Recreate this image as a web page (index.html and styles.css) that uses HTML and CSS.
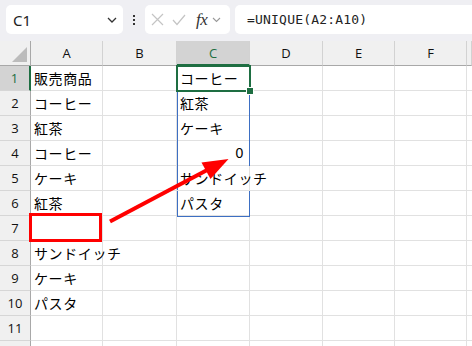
FILE: index.html
```html
<!DOCTYPE html>
<html lang="ja">
<head>
<meta charset="utf-8">
<link rel="stylesheet" href="styles.css">
</head>
<body>
<div class="toolbar">
  <div class="namebox">
    <span class="ref">C1</span>
    <svg class="chev" width="10" height="6" viewBox="0 0 10 6"><path d="M1 1 L5 5 L9 1" fill="none" stroke="#333" stroke-width="1.3"/></svg>
  </div>
  <div class="dots"><i></i><i></i><i></i></div>
  <div class="fxbox">
    <svg class="ic" width="13" height="13" viewBox="0 0 13 13"><path d="M1 1 L12 12 M12 1 L1 12" stroke="#c4c4c4" stroke-width="1.2" fill="none"/></svg>
    <svg class="ic" width="14" height="12" viewBox="0 0 14 12"><path d="M1 6 L5 10.5 L13 1" stroke="#c4c4c4" stroke-width="1.2" fill="none"/></svg>
    <span class="fx">fx</span>
    <svg class="chev2" width="9" height="6" viewBox="0 0 9 6"><path d="M1 1 L4.5 4.5 L8 1" fill="none" stroke="#999" stroke-width="1.1"/></svg>
  </div>
  <div class="formula">=UNIQUE(A2:A10)</div>
</div>
<div class="sheet">
  <div class="grid">
    <div class="corner"><span class="tri"></span></div>
    <div class="ch">A</div><div class="ch">B</div><div class="ch sel">C</div><div class="ch">D</div><div class="ch">E</div><div class="ch">F</div><div class="ch last"></div>

    <div class="rh sel">1</div><div class="c">販売商品</div><div class="c"></div><div class="c">コーヒー</div><div class="c"></div><div class="c"></div><div class="c"></div><div class="c last"></div>
    <div class="rh">2</div><div class="c">コーヒー</div><div class="c"></div><div class="c">紅茶</div><div class="c"></div><div class="c"></div><div class="c"></div><div class="c last"></div>
    <div class="rh">3</div><div class="c">紅茶</div><div class="c"></div><div class="c">ケーキ</div><div class="c"></div><div class="c"></div><div class="c"></div><div class="c last"></div>
    <div class="rh">4</div><div class="c">コーヒー</div><div class="c"></div><div class="c num">0</div><div class="c"></div><div class="c"></div><div class="c"></div><div class="c last"></div>
    <div class="rh">5</div><div class="c">ケーキ</div><div class="c"></div><div class="c ov">サンドイッチ</div><div class="c"></div><div class="c"></div><div class="c"></div><div class="c last"></div>
    <div class="rh">6</div><div class="c">紅茶</div><div class="c"></div><div class="c">パスタ</div><div class="c"></div><div class="c"></div><div class="c"></div><div class="c last"></div>
    <div class="rh">7</div><div class="c"></div><div class="c"></div><div class="c"></div><div class="c"></div><div class="c"></div><div class="c"></div><div class="c last"></div>
    <div class="rh">8</div><div class="c ov">サンドイッチ</div><div class="c"></div><div class="c"></div><div class="c"></div><div class="c"></div><div class="c"></div><div class="c last"></div>
    <div class="rh">9</div><div class="c">ケーキ</div><div class="c"></div><div class="c"></div><div class="c"></div><div class="c"></div><div class="c"></div><div class="c last"></div>
    <div class="rh">10</div><div class="c">パスタ</div><div class="c"></div><div class="c"></div><div class="c"></div><div class="c"></div><div class="c"></div><div class="c last"></div>
    <div class="rh">11</div><div class="c"></div><div class="c"></div><div class="c"></div><div class="c"></div><div class="c"></div><div class="c"></div><div class="c last"></div>
    <div class="rh"></div><div class="c"></div><div class="c"></div><div class="c"></div><div class="c"></div><div class="c"></div><div class="c"></div><div class="c last"></div>
  </div>
  <div class="spill"></div>
  <div class="active"><span class="handle"></span></div>
  <svg class="annot" width="472" height="305" viewBox="0 41 472 305">
    <rect x="30.5" y="214.5" width="70" height="26" fill="none" stroke="#ff0000" stroke-width="3"/>
    <line x1="110" y1="221.5" x2="210" y2="168.5" stroke="#ff0000" stroke-width="4"/>
    <polygon points="228.5,159 210.5,179 201.5,162.5" fill="#ff0000"/>
  </svg>
</div>
</body>
</html>
```
FILE: styles.css
```css
* { box-sizing: border-box; }
html, body { margin: 0; padding: 0; }
body {
  width: 472px;
  height: 346px;
  overflow: hidden;
  background: #ffffff;
  font-family: "Noto Sans", "Noto Sans CJK JP", sans-serif;
}
.toolbar {
  height: 41px;
  background: #efeff3;
  display: flex;
  align-items: flex-start;
  padding: 5px 0 0 6px;
  overflow: hidden;
}
.namebox {
  width: 117px;
  height: 29px;
  background: #fff;
  border-radius: 5px;
  display: flex;
  align-items: center;
  justify-content: space-between;
  padding: 0 6px 0 7px;
  flex: none;
}
.ref { font-size: 15px; color: #222; }
.dots {
  width: 22px;
  height: 29px;
  display: flex;
  flex-direction: column;
  align-items: center;
  justify-content: center;
  gap: 2px;
  flex: none;
}
.dots i { width: 2px; height: 2px; background: #333; display: block; }
.fxbox {
  width: 85px;
  height: 29px;
  background: #fff;
  border-radius: 5px;
  display: flex;
  align-items: center;
  padding: 0 0 0 6px;
  flex: none;
}
.fxbox .ic { margin-right: 8px; flex: none; }
.fxbox .ic + .ic { margin-right: 10px; }
.fx {
  font-family: "Liberation Serif", serif;
  font-style: italic;
  font-size: 17px;
  color: #333;
  margin-right: 5px;
  letter-spacing: -0.5px;
}
.chev2 { flex: none; }
.formula {
  margin-left: 5px;
  height: 29px;
  flex: 1;
  background: #fff;
  border-radius: 5px 0 0 5px;
  display: flex;
  align-items: center;
  padding-left: 12px;
  font-family: "DejaVu Sans Mono", monospace;
  font-size: 13px;
  letter-spacing: 0.2px;
  color: #222;
  white-space: nowrap;
}
.sheet { position: relative; height: 305px; overflow: hidden; }
.grid {
  display: grid;
  grid-template-columns: 31px 72px 74px 73px 73px 72px 72px 1fr;
  grid-auto-rows: 25px;
}
.corner {
  background: #f0f0f0;
  border-right: 1px solid #a8a8a8;
  border-bottom: 1px solid #a8a8a8;
  position: relative;
}
.tri {
  position: absolute;
  right: 3px;
  bottom: 3px;
  width: 0; height: 0;
  border-left: 15px solid transparent;
  border-bottom: 15px solid #bcbcbc;
}
.ch {
  background: #f0f0f0;
  border-right: 1px solid #d2d2d2;
  border-bottom: 1px solid #a8a8a8;
  font-family: "Open Sans", sans-serif;
  font-size: 13px;
  color: #111;
  display: flex;
  align-items: center;
  justify-content: center;
}
.ch.sel {
  background: #d3d3d3;
  border-bottom: 2px solid #1e6e42;
  color: #1e6e42;
}
.rh {
  background: #f0f0f0;
  border-right: 1px solid #a8a8a8;
  border-bottom: 1px solid #d6d6d6;
  font-family: "Open Sans", sans-serif;
  font-size: 13px;
  color: #111;
  display: flex;
  align-items: center;
  justify-content: center;
}
.rh.sel {
  background: #d3d3d3;
  border-right: 2px solid #1e6e42;
  color: #1e6e42;
}
.c {
  border-right: 1px solid #e1e1e1;
  border-bottom: 1px solid #e1e1e1;
  font-family: "Noto Sans CJK JP", sans-serif;
  font-size: 14px;
  letter-spacing: 0.6px;
  color: #000;
  display: flex;
  align-items: center;
  padding-left: 3px;
  white-space: nowrap;
  overflow: visible;
}
.c.last { border-right: none; }
.c.num {
  justify-content: flex-end;
  padding-right: 5px;
  font-family: "Liberation Sans", sans-serif;
  font-size: 14px;
}
.c.ov { position: relative; z-index: 1; }
.spill {
  position: absolute;
  left: 177px;
  top: 25px;
  width: 73px;
  height: 151px;
  border: 1px solid #3d6fc3;
  pointer-events: none;
}
.active {
  position: absolute;
  left: 176px;
  top: 24px;
  width: 75px;
  height: 27px;
  border: 2px solid #1e6e42;
  pointer-events: none;
}
.handle {
  position: absolute;
  right: -4px;
  bottom: -4px;
  width: 6px;
  height: 6px;
  background: #1e6e42;
  border: 1px solid #fff;
  box-sizing: content-box;
  margin: -1px;
}
.annot {
  position: absolute;
  left: 0;
  top: 0;
  pointer-events: none;
  z-index: 2;
}
```
